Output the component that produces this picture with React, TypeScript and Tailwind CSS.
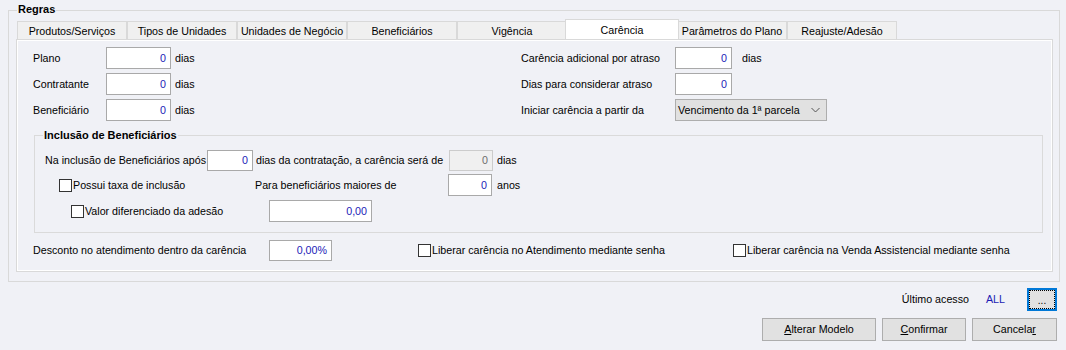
import React from "react";

const tabs = [
  "Produtos/Serviços",
  "Tipos de Unidades",
  "Unidades de Negócio",
  "Beneficiários",
  "Vigência",
  "Carência",
  "Parâmetros do Plano",
  "Reajuste/Adesão",
];

const NumBox = ({ value, className = "", disabled = false }: { value: string; className?: string; disabled?: boolean }) => (
  <div
    className={
      "flex items-center justify-end border pr-[4px] " +
      (disabled
        ? "border-[#cccccc] bg-[#f0f0f0] text-[#6d6d6d] "
        : "border-[#a9a9a9] bg-white text-[#2222b8] ") +
      className
    }
  >
    {value}
  </div>
);

const Check = ({ label }: { label: string }) => (
  <span className="flex items-center">
    <span className="h-[13px] w-[13px] border border-[#333333] bg-white" />
    <span className="ml-px">{label}</span>
  </span>
);

export default function App() {
  return (
    <div className="h-[350px] w-[1066px] whitespace-nowrap bg-[#f0f1f6] font-['Liberation_Sans',Arial,sans-serif] text-[10.7px] leading-none text-black">
      <div className="pt-[10px] pl-[8px]">
        {/* Regras */}
        <div className="relative h-[272px] w-[1052px] border border-[#d9d9d9]">
          <span className="absolute -top-[7px] left-[8px] bg-[#f0f1f6] px-px text-[11px] font-bold">Regras</span>

          <div className="mt-[10px] ml-[8px] flex h-[18px] items-end">
            {tabs.map((t) =>
              t === "Carência" ? (
                <div
                  key={t}
                  className="relative z-10 -mx-[2px] flex h-[20px] w-[114px] items-start justify-center border border-b-0 border-[#d9d9d9] bg-white pt-[5px]"
                >
                  {t}
                </div>
              ) : (
                <div
                  key={t}
                  className="flex h-[18px] w-[110px] items-center justify-center border border-b-0 border-[#d9d9d9] bg-[#f0f0f0] pt-[2px]"
                >
                  {t}
                </div>
              )
            )}
          </div>

          {/* tab panel */}
          <div className="ml-[7px] h-[233px] w-[1037px] border border-[#d9d9d9]">
            <div className="h-full w-full border border-white pt-[6px] pl-[15px]">
              <div className="flex">
                <div className="flex w-[488px] flex-col gap-[4px]">
                  {["Plano", "Contratante", "Beneficiário"].map((l) => (
                    <div key={l} className="flex h-[22px] items-center">
                      <span className="w-[73px]">{l}</span>
                      <NumBox value="0" className="h-[22px] w-[65px]" />
                      <span className="ml-[4px]">dias</span>
                    </div>
                  ))}
                </div>
                <div className="flex flex-col gap-[4px]">
                  <div className="flex h-[22px] items-center">
                    <span className="w-[154px]">Carência adicional por atraso</span>
                    <NumBox value="0" className="h-[22px] w-[57px]" />
                    <span className="ml-[10px]">dias</span>
                  </div>
                  <div className="flex h-[22px] items-center">
                    <span className="w-[154px]">Dias para considerar atraso</span>
                    <NumBox value="0" className="h-[22px] w-[57px]" />
                  </div>
                  <div className="flex h-[22px] items-center">
                    <span className="w-[154px]">Iniciar carência a partir da</span>
                    <div className="flex h-[22px] w-[152px] items-center justify-between border border-[#adadad] bg-[#e1e1e1] pr-[6px] pl-[2px]">
                      <span>Vencimento da 1ª parcela</span>
                      <svg width="9" height="6" viewBox="0 0 9 6" fill="none" stroke="#555" strokeWidth="1">
                        <path d="M0.5 1 L4.5 5 L8.5 1" />
                      </svg>
                    </div>
                  </div>
                </div>
              </div>

              {/* Inclusão de Beneficiários */}
              <div className="relative mt-[14px] ml-px h-[98px] w-[1009px] border border-[#dadada]">
                <span className="absolute -top-[6px] left-[8px] bg-[#f0f1f6] px-px text-[11px] font-bold">Inclusão de Beneficiários</span>
                <div className="mt-[14px] flex h-[21px] items-center pl-[10px]">
                  <span className="w-[162px]">Na inclusão de Beneficiários após</span>
                  <NumBox value="0" className="h-[21px] w-[46px]" />
                  <span className="w-[196px] pl-[3px]">dias da contratação, a carência será de</span>
                  <NumBox value="0" disabled className="h-[21px] w-[44px]" />
                  <span className="ml-[4px]">dias</span>
                </div>
                <div className="mt-[3px] flex h-[22px] items-center pl-[24px]">
                  <span className="w-[196px]">
                    <Check label="Possui taxa de inclusão" />
                  </span>
                  <span className="w-[193px]">Para beneficiários maiores de</span>
                  <NumBox value="0" className="h-[22px] w-[44px]" />
                  <span className="ml-[5px]">anos</span>
                </div>
                <div className="mt-[4px] flex h-[22px] items-center pl-[36px]">
                  <span className="w-[198px]">
                    <Check label="Valor diferenciado da adesão" />
                  </span>
                  <NumBox value="0,00" className="h-[22px] w-[103px]" />
                </div>
              </div>

              <div className="mt-[7px] flex h-[21px] items-center">
                <span className="w-[236px]">Desconto no atendimento dentro da carência</span>
                <NumBox value="0,00%" className="h-[21px] w-[63px]" />
                <span className="ml-[86px] w-[315px]">
                  <Check label="Liberar carência no Atendimento mediante senha" />
                </span>
                <Check label="Liberar carência na Venda Assistencial mediante senha" />
              </div>
            </div>
          </div>
        </div>
      </div>

      <div className="mt-[6px] flex h-[23px] items-center justify-end pr-[9px]">
        <span>Último acesso</span>
        <span className="ml-[17px] text-[#1c1cb4]">ALL</span>
        <div className="ml-[22px] flex h-[23px] w-[30px] items-center justify-center border-2 border-[#0078d7] bg-[#e1e1e1]">
          <div className="flex h-full w-full items-end justify-center border border-dotted border-black pb-[2px] text-[10px]">...</div>
        </div>
      </div>

      <div className="mt-[7px] flex justify-end gap-[6px] pr-[9px]">
        <div className="flex h-[23px] w-[114px] items-center justify-center border border-[#adadad] bg-[#e1e1e1]">
          <span><span className="underline">A</span>lterar Modelo</span>
        </div>
        <div className="flex h-[23px] w-[84px] items-center justify-center border border-[#adadad] bg-[#e1e1e1]">
          <span><span className="underline">C</span>onfirmar</span>
        </div>
        <div className="flex h-[23px] w-[85px] items-center justify-center border border-[#adadad] bg-[#e1e1e1]">
          <span>Cancela<span className="underline">r</span></span>
        </div>
      </div>
    </div>
  );
}
